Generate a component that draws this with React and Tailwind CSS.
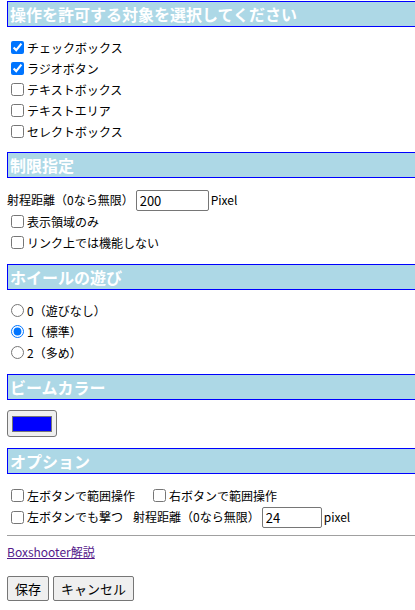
import React, { useState } from 'react';

const font = { fontFamily: '"Noto Sans CJK JP", "Noto Sans", sans-serif' };

function Header({ children, className = '' }) {
  return (
    <div className={`ml-[7px] h-[26px] border-y border-l border-[#0000ff] bg-[#add8e6] pl-[2px] text-[16px] font-bold leading-[24px] text-white ${className}`}>
      {children}
    </div>
  );
}

function Check({ label, checked = false }) {
  return (
    <label className="flex h-[21px] items-center">
      <input type="checkbox" defaultChecked={checked} className="ml-[4px] mr-[3px] h-[13px] w-[13px]" />
      <span>{label}</span>
    </label>
  );
}

function Radio({ label, value, current, onChange }) {
  return (
    <label className="flex h-[21px] items-center">
      <input
        type="radio"
        name="wheel"
        checked={current === value}
        onChange={() => onChange(value)}
        className="ml-[4px] mr-[3px] h-[13px] w-[13px]"
      />
      <span>{label}</span>
    </label>
  );
}

function TextBox({ value, width }) {
  return (
    <input
      type="text"
      defaultValue={value}
      className="h-[21px] rounded-[2px] border border-[#767676] px-[3px] text-[13px] text-black outline-none"
      style={{ width }}
    />
  );
}

export default function App() {
  const [wheel, setWheel] = useState(1);

  return (
    <div className="min-h-[610px] w-[415px] overflow-hidden bg-white pt-[1px] text-[12px] text-black" style={font}>
      {/* 対象 */}
      <Header>操作を許可する対象を選択してください</Header>
      <div className="ml-[7px] mt-[10px]">
        <Check label="チェックボックス" checked />
        <Check label="ラジオボタン" checked />
        <Check label="テキストボックス" />
        <Check label="テキストエリア" />
        <Check label="セレクトボックス" />
      </div>

      {/* 制限 */}
      <Header className="mt-[10px]">制限指定</Header>
      <div className="ml-[7px] mt-[11px]">
        <div className="flex h-[22px] items-center">
          <span>射程距離（0なら無限）</span>
          <span className="ml-[2px]"><TextBox value="200" width={73} /></span>
          <span className="ml-[2px]">Pixel</span>
        </div>
        <Check label="表示領域のみ" />
        <Check label="リンク上では機能しない" />
      </div>

      {/* ホイール */}
      <Header className="mt-[11px]">ホイールの遊び</Header>
      <div className="ml-[7px] mt-[10px]">
        <Radio label="0（遊びなし）" value={0} current={wheel} onChange={setWheel} />
        <Radio label="1（標準）" value={1} current={wheel} onChange={setWheel} />
        <Radio label="2（多め）" value={2} current={wheel} onChange={setWheel} />
      </div>

      {/* カラー */}
      <Header className="mt-[11px]">ビームカラー</Header>
      <div className="ml-[7px] mt-[10px] flex h-[27px] w-[50px] items-center justify-center rounded-[3px] border border-[#767676] bg-[#efefef]">
        <div className="h-[16px] w-[40px] border border-[#777777] bg-[#0000ff]"></div>
      </div>

      {/* オプション */}
      <Header className="mt-[11px]">オプション</Header>
      <div className="ml-[7px] mt-[11px]">
        <div className="flex">
          <Check label="左ボタンで範囲操作" />
          <span className="ml-[14px]"><Check label="右ボタンで範囲操作" /></span>
        </div>
        <div className="flex h-[22px] items-center">
          <Check label="左ボタンでも撃つ" />
          <span className="ml-[10px]">射程距離（0なら無限）</span>
          <span className="ml-[2px]"><TextBox value="24" width={60} /></span>
          <span className="ml-[2px]">pixel</span>
        </div>
      </div>

      <div className="ml-[7px] mt-[7px] border-t border-[#a0a0a0]"></div>

      <div className="ml-[7px] mt-[8px] leading-[16px]">
        <a href="#" className="text-[#551a8b] underline">Boxshooter解説</a>
      </div>

      <div className="ml-[7px] mt-[16px] flex gap-[4px]">
        <button className="h-[25px] rounded-[2px] border border-[#767676] bg-[#efefef] px-[7px] text-[13px]">保存</button>
        <button className="h-[25px] rounded-[2px] border border-[#767676] bg-[#efefef] px-[7px] text-[13px]">キャンセル</button>
      </div>
    </div>
  );
}
